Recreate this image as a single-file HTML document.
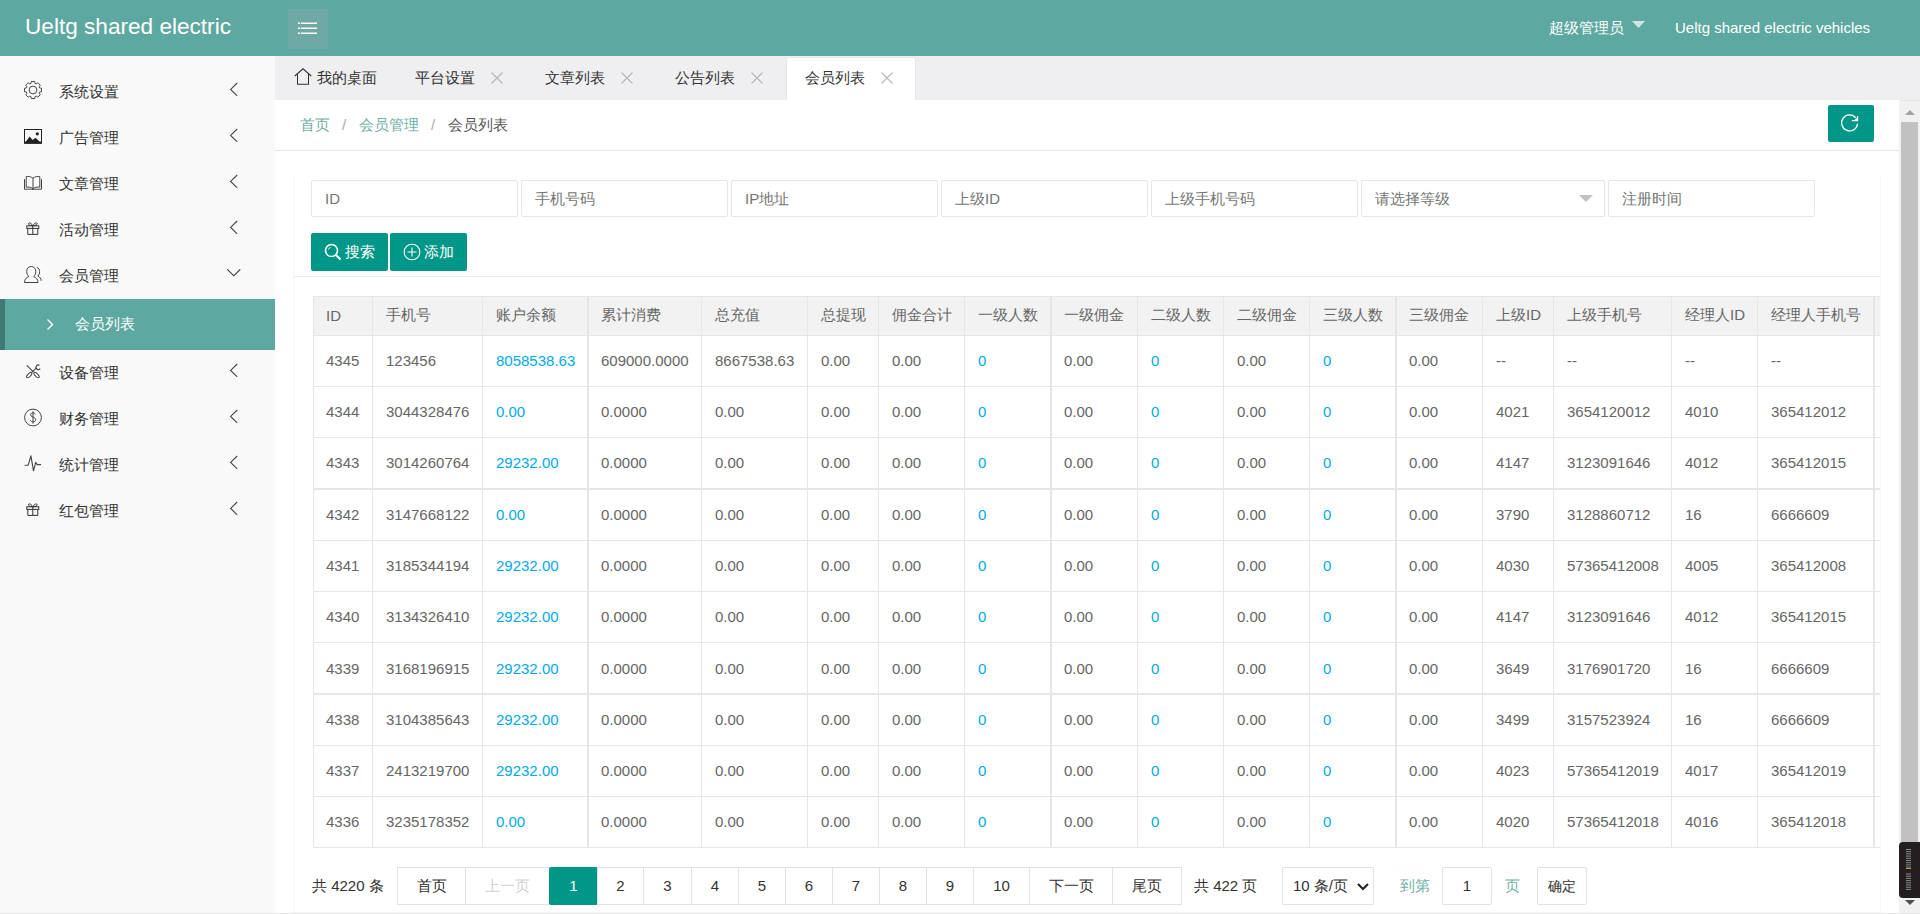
<!DOCTYPE html><html><head><meta charset="utf-8"><style>
*{margin:0;padding:0;box-sizing:border-box}
i{font-style:normal;display:inline-block;width:1em}
html,body{width:1920px;height:914px;overflow:hidden;background:#fff;font-family:"Liberation Sans",sans-serif;font-size:15px;color:#333}
.a{position:absolute;white-space:nowrap}
#hdr{position:absolute;left:0;top:0;width:1920px;height:56px;background:#5da8a0}
#logo{left:25px;top:12px;font-size:22.6px;color:#fff;line-height:30px}
#menubtn{left:288px;top:9px;width:40px;height:40px;background:#6fa9a3}
#side{position:absolute;left:0;top:56px;width:275px;height:858px;background:#f9f9f9}
.mt{left:59px;line-height:20px;font-size:15px;color:#333}
.arr{left:229px;width:10px;height:14px}
#tabs{position:absolute;left:275px;top:56px;width:1645px;height:45px;background:#efeef0;border-bottom:1px solid #e4e4e4}
.tt{top:0;line-height:44px;font-size:15px;color:#333}
#crumb{position:absolute;left:275px;top:100px;width:1625px;height:51px;border-bottom:1px solid #e6e6e6;background:#fff}
.inp{top:180px;height:37px;border:1px solid #e6e6e6;border-radius:2px;background:#fff;color:#757575;font-size:15px;line-height:35px;padding-left:13px}
.btn{top:233px;height:38px;width:77px;background:#009688;border-radius:2px;color:#fff;font-size:15px;line-height:38px}
table{border-collapse:collapse;table-layout:fixed;font-size:15px;color:#666}
td,th{border:1px solid #e6e6e6;padding:0 0 0 13px;text-align:left;font-weight:normal;white-space:nowrap;overflow:hidden}
th{background:#f2f2f2;height:39px;padding-bottom:2px}
td{padding-bottom:1px}
.c1{padding-left:12px}
.lk{color:#01aaed}
.pg{top:867px;height:38px;line-height:36px;border:1px solid #e2e2e2;background:#fff;text-align:center;color:#333;font-size:15px}
</style></head><body>
<div id="hdr">
<div id="logo" class="a">Ueltg shared electric</div>
<div id="menubtn" class="a"><svg width="40" height="40" viewBox="0 0 40 40" style="position:absolute;left:0;top:0"><g fill="#fff"><rect x="10" y="13.5" width="2" height="1.5"/><rect x="13" y="13.5" width="16" height="1.5"/><rect x="10" y="18.5" width="2" height="1.5"/><rect x="13" y="18.5" width="16" height="1.5"/><rect x="10" y="23.5" width="2" height="1.5"/><rect x="13" y="23.5" width="16" height="1.5"/></g></svg></div>
<div class="a" style="left:1549px;top:18px;font-size:15px;color:#fff;line-height:20px"><i>超</i><i>级</i><i>管</i><i>理</i><i>员</i></div>
<svg class="a" style="left:1632px;top:21px" width="13" height="8"><path d="M0 0H13L6.5 7Z" fill="#d3e4e1"/></svg>
<div class="a" style="left:1675px;top:18px;font-size:15px;color:#fff;line-height:20px">Ueltg shared electric vehicles</div>
</div>
<div id="side"></div>
<svg class="a" style="left:23px;top:80px" width="20" height="20" viewBox="0 0 20 20"><path d="M16.59 7.96 L18.53 8.27 L18.53 11.73 L16.59 12.04 L16.10 13.22 L17.25 14.81 L14.81 17.25 L13.22 16.10 L12.04 16.59 L11.73 18.53 L8.27 18.53 L7.96 16.59 L6.78 16.10 L5.19 17.25 L2.75 14.81 L3.90 13.22 L3.41 12.04 L1.47 11.73 L1.47 8.27 L3.41 7.96 L3.90 6.78 L2.75 5.19 L5.19 2.75 L6.78 3.90 L7.96 3.41 L8.27 1.47 L11.73 1.47 L12.04 3.41 L13.22 3.90 L14.81 2.75 L17.25 5.19 L16.10 6.78Z" fill="none" stroke="#444" stroke-width="1" stroke-linejoin="round"/><circle cx="10" cy="10" r="3.9" fill="none" stroke="#444" stroke-width="1"/></svg>
<div class="a mt" style="top:82px"><i>系</i><i>统</i><i>设</i><i>置</i></div>
<svg class="a arr" style="top:82px" width="10" height="16"><path d="M8.2 1L1.6 7.4L8.2 13.8" fill="none" stroke="#444" stroke-width="1.1"/></svg>
<svg class="a" style="left:23px;top:126px" width="20" height="20" viewBox="0 0 20 20"><rect x="1.5" y="3.5" width="17" height="13.5" fill="none" stroke="#222" stroke-width="1"/><path d="M1.5 17.5L6.6 10.6L9.6 14L12.6 11.8L18.5 17.5Z" fill="#222"/><rect x="1" y="15.6" width="18" height="2" fill="#222"/><circle cx="14.3" cy="7.8" r="1.6" fill="#222"/></svg>
<div class="a mt" style="top:128px"><i>广</i><i>告</i><i>管</i><i>理</i></div>
<svg class="a arr" style="top:128px" width="10" height="16"><path d="M8.2 1L1.6 7.4L8.2 13.8" fill="none" stroke="#444" stroke-width="1.1"/></svg>
<svg class="a" style="left:23px;top:172px" width="20" height="20" viewBox="0 0 20 20"><path d="M10 6.2C8 4.6 5.2 4.2 3.2 4.6V15.2C5.2 14.8 8 15.2 10 16.6C12 15.2 14.8 14.8 16.8 15.2V4.6C14.8 4.2 12 4.6 10 6.2ZM10 6.2V16.6" fill="none" stroke="#444" stroke-width="1"/><path d="M1.5 7.2V17.2H8.5Q10 17.8 11.5 17.2H18.5V7.2" fill="none" stroke="#444" stroke-width="1"/></svg>
<div class="a mt" style="top:174px"><i>文</i><i>章</i><i>管</i><i>理</i></div>
<svg class="a arr" style="top:174px" width="10" height="16"><path d="M8.2 1L1.6 7.4L8.2 13.8" fill="none" stroke="#444" stroke-width="1.1"/></svg>
<svg class="a" style="left:23px;top:218px" width="20" height="20" viewBox="0 0 20 20"><rect x="3.8" y="7.8" width="12" height="2.6" fill="none" stroke="#333" stroke-width="1"/><path d="M4.8 10.4V16.4H14.8V10.4M9.8 7.8V16.4" fill="none" stroke="#333" stroke-width="1"/><path d="M9.8 7.8C8.5 5.2 6 4 5.5 5.5C5.2 6.6 6.5 7.5 9.8 7.8C13.1 7.5 14.4 6.6 14.1 5.5C13.6 4 11.1 5.2 9.8 7.8" fill="none" stroke="#333" stroke-width="1"/></svg>
<div class="a mt" style="top:220px"><i>活</i><i>动</i><i>管</i><i>理</i></div>
<svg class="a arr" style="top:220px" width="10" height="16"><path d="M8.2 1L1.6 7.4L8.2 13.8" fill="none" stroke="#444" stroke-width="1.1"/></svg>
<svg class="a" style="left:23px;top:264px" width="20" height="20" viewBox="0 0 20 20"><path d="M1.5 18.5H15C15 15.2 13.2 13.6 10.6 12.6C12 11.6 12.8 9.6 12.8 7.5C12.8 4.5 11 2.5 8.25 2.5C5.5 2.5 3.7 4.5 3.7 7.5C3.7 9.6 4.5 11.6 5.9 12.6C3.3 13.6 1.5 15.2 1.5 18.5Z" fill="none" stroke="#444" stroke-width="1"/><path d="M13.8 3.4C15.6 3.9 16.6 5.6 16.6 7.6C16.6 9.5 15.9 11 14.8 12C16.8 13 18.2 14.6 18.2 16.8" fill="none" stroke="#444" stroke-width="1"/></svg>
<div class="a mt" style="top:266px"><i>会</i><i>员</i><i>管</i><i>理</i></div>
<svg class="a" style="left:226px;top:268px" width="16" height="10"><path d="M1.3 1.3L7.8 7.8L14.3 1.3" fill="none" stroke="#333" stroke-width="1.1"/></svg>
<svg class="a" style="left:23px;top:361px" width="20" height="20" viewBox="0 0 20 20"><path d="M3.8 4.3L10.6 11.1" stroke="#444" stroke-width="1.1"/><ellipse cx="13.6" cy="14.1" rx="3.4" ry="1.5" transform="rotate(45 13.6 14.1)" fill="none" stroke="#444" stroke-width="1"/><ellipse cx="6.2" cy="14.1" rx="3.4" ry="1.5" transform="rotate(-45 6.2 14.1)" fill="none" stroke="#444" stroke-width="1"/><path d="M8.6 11.6L13.4 6.8" stroke="#444" stroke-width="1.1"/><path d="M16.6 4.4A2.3 2.3 0 1 0 17.2 7.6" fill="none" stroke="#444" stroke-width="1.1"/></svg>
<div class="a mt" style="top:363px"><i>设</i><i>备</i><i>管</i><i>理</i></div>
<svg class="a arr" style="top:363px" width="10" height="16"><path d="M8.2 1L1.6 7.4L8.2 13.8" fill="none" stroke="#444" stroke-width="1.1"/></svg>
<svg class="a" style="left:23px;top:407px" width="20" height="20" viewBox="0 0 20 20"><circle cx="10" cy="10.5" r="8.4" fill="none" stroke="#444" stroke-width="1"/><path d="M12.4 7.3C12 6.4 11.1 5.9 10 5.9C8.6 5.9 7.6 6.7 7.6 7.9C7.6 10.5 12.6 9.6 12.6 12.6C12.6 13.9 11.5 14.9 10 14.9C8.8 14.9 7.8 14.3 7.4 13.3M10 4.3V16.7" fill="none" stroke="#444" stroke-width="1"/></svg>
<div class="a mt" style="top:409px"><i>财</i><i>务</i><i>管</i><i>理</i></div>
<svg class="a arr" style="top:409px" width="10" height="16"><path d="M8.2 1L1.6 7.4L8.2 13.8" fill="none" stroke="#444" stroke-width="1.1"/></svg>
<svg class="a" style="left:23px;top:453px" width="20" height="20" viewBox="0 0 20 20"><path d="M1.7 12.2H5.2L7.9 2.9L10.5 17.8L12.7 9.4L14.2 11.6H18" fill="none" stroke="#444" stroke-width="1.1" stroke-linejoin="round"/></svg>
<div class="a mt" style="top:455px"><i>统</i><i>计</i><i>管</i><i>理</i></div>
<svg class="a arr" style="top:455px" width="10" height="16"><path d="M8.2 1L1.6 7.4L8.2 13.8" fill="none" stroke="#444" stroke-width="1.1"/></svg>
<svg class="a" style="left:23px;top:499px" width="20" height="20" viewBox="0 0 20 20"><rect x="3.8" y="7.8" width="12" height="2.6" fill="none" stroke="#333" stroke-width="1"/><path d="M4.8 10.4V16.4H14.8V10.4M9.8 7.8V16.4" fill="none" stroke="#333" stroke-width="1"/><path d="M9.8 7.8C8.5 5.2 6 4 5.5 5.5C5.2 6.6 6.5 7.5 9.8 7.8C13.1 7.5 14.4 6.6 14.1 5.5C13.6 4 11.1 5.2 9.8 7.8" fill="none" stroke="#333" stroke-width="1"/></svg>
<div class="a mt" style="top:501px"><i>红</i><i>包</i><i>管</i><i>理</i></div>
<svg class="a arr" style="top:501px" width="10" height="16"><path d="M8.2 1L1.6 7.4L8.2 13.8" fill="none" stroke="#444" stroke-width="1.1"/></svg>
<div class="a" style="left:0;top:299px;width:275px;height:51px;background:#5da8a0"></div>
<div class="a" style="left:0;top:299px;width:5px;height:51px;background:#3f7a74"></div>
<svg class="a" style="left:46px;top:318px" width="8" height="13"><path d="M1.5 1.5l5 5-5 5" fill="none" stroke="#fff" stroke-width="1.4"/></svg>
<div class="a" style="left:75px;top:314px;line-height:20px;color:#fff;font-size:15px"><i>会</i><i>员</i><i>列</i><i>表</i></div>
<div id="tabs"></div>
<div class="a" style="left:786px;top:57px;width:130px;height:44px;background:#fff;border:1px solid #e6e6e6;border-bottom:none;border-radius:2px 2px 0 0"></div>
<svg class="a" style="left:294px;top:68px" width="18" height="17" viewBox="0 0 18 17"><path d="M0.8 8L9 0.8L17.2 8M3.5 6V16.2h11V6" fill="none" stroke="#333" stroke-width="1.05"/></svg>
<div class="a tt" style="left:317px;top:56px"><i>我</i><i>的</i><i>桌</i><i>面</i></div>
<div class="a tt" style="left:415px;top:56px"><i>平</i><i>台</i><i>设</i><i>置</i></div>
<svg class="a" style="left:491px;top:72px" width="12" height="12"><path d="M.5.5l11 11M11.5.5l-11 11" stroke="#b5b5b5" stroke-width="1.1"/></svg>
<div class="a tt" style="left:545px;top:56px"><i>文</i><i>章</i><i>列</i><i>表</i></div>
<svg class="a" style="left:621px;top:72px" width="12" height="12"><path d="M.5.5l11 11M11.5.5l-11 11" stroke="#b5b5b5" stroke-width="1.1"/></svg>
<div class="a tt" style="left:675px;top:56px"><i>公</i><i>告</i><i>列</i><i>表</i></div>
<svg class="a" style="left:751px;top:72px" width="12" height="12"><path d="M.5.5l11 11M11.5.5l-11 11" stroke="#b5b5b5" stroke-width="1.1"/></svg>
<div class="a tt" style="left:805px;top:56px"><i>会</i><i>员</i><i>列</i><i>表</i></div>
<svg class="a" style="left:881px;top:72px" width="12" height="12"><path d="M.5.5l11 11M11.5.5l-11 11" stroke="#b5b5b5" stroke-width="1.1"/></svg>
<div id="crumb"></div>
<div class="a" style="left:300px;top:115px;line-height:20px;font-size:15px;color:#6fb0a8"><i>首</i><i>页</i></div>
<div class="a" style="left:342px;top:115px;line-height:20px;font-size:15px;color:#aaa">/</div>
<div class="a" style="left:359px;top:115px;line-height:20px;font-size:15px;color:#6fb0a8"><i>会</i><i>员</i><i>管</i><i>理</i></div>
<div class="a" style="left:431px;top:115px;line-height:20px;font-size:15px;color:#aaa">/</div>
<div class="a" style="left:448px;top:115px;line-height:20px;font-size:15px;color:#555"><i>会</i><i>员</i><i>列</i><i>表</i></div>
<div class="a" style="left:1828px;top:105px;width:46px;height:37px;background:#009688;border-radius:2px"><svg width="46" height="37" viewBox="0 0 46 37"><path d="M27.73 12.76A8 8 0 1 0 29.57 18.6" fill="none" stroke="#fff" stroke-width="1.2"/><path d="M23.9 15.6H29.6V11" fill="none" stroke="#fff" stroke-width="1.3"/><path d="M26 15.6L29.6 12V15.6Z" fill="#fff"/></svg></div>
<div class="a" style="left:1899px;top:101px;width:21px;height:813px;background:#f1f1f1"></div>
<div class="a" style="left:1901px;top:122px;width:17px;height:720px;background:#c1c1c1"></div>
<svg class="a" style="left:1904px;top:109px" width="12" height="7"><path d="M1 6L6 1l5 5z" fill="#a3a3a3"/></svg>
<div class="a" style="left:1899px;top:842px;width:21px;height:56px;background:#231f20;border-radius:4px 0 0 4px"></div>
<svg class="a" style="left:1906px;top:849px" width="5" height="42"><rect x="0" y="0.0" width="5" height="1" fill="#8a8a8a"/><rect x="0" y="2.2" width="5" height="1" fill="#8a8a8a"/><rect x="0" y="4.4" width="5" height="1" fill="#8a8a8a"/><rect x="0" y="6.6" width="5" height="1" fill="#8a8a8a"/><rect x="0" y="8.8" width="5" height="1" fill="#8a8a8a"/><rect x="0" y="11.0" width="5" height="1" fill="#8a8a8a"/><rect x="0" y="13.2" width="5" height="1" fill="#8a8a8a"/><rect x="0" y="15.4" width="5" height="1" fill="#8a8a8a"/><rect x="0" y="17.6" width="5" height="1" fill="#8a8a8a"/><rect x="0" y="19" width="5" height="1" fill="#c8884a"/><rect x="0" y="24.5" width="5" height="1" fill="#8a8a8a"/><rect x="0" y="26.7" width="5" height="1" fill="#8a8a8a"/><rect x="0" y="28.9" width="5" height="1" fill="#8a8a8a"/><rect x="0" y="31.1" width="5" height="1" fill="#8a8a8a"/><rect x="0" y="33.3" width="5" height="1" fill="#8a8a8a"/><rect x="0" y="35.5" width="5" height="1" fill="#8a8a8a"/><rect x="0" y="37.7" width="5" height="1" fill="#8a8a8a"/><rect x="0" y="39.9" width="5" height="1" fill="#8a8a8a"/></svg>
<svg class="a" style="left:1904px;top:899px" width="12" height="8"><path d="M1 1L6 6l5-5z" fill="#505050"/></svg>
<div class="a" style="left:0;top:913px;width:1920px;height:1px;background:#e4e4e4"></div>
<div class="a" style="left:293px;top:174px;width:1588px;height:739px;border:1px dotted #f0f0f0;border-top:none"></div>
<div class="a" style="left:293px;top:276px;width:1587px;height:1px;background:#eee"></div>
<div class="a inp" style="left:311px;width:207px">ID</div>
<div class="a inp" style="left:521px;width:207px"><i>手</i><i>机</i><i>号</i><i>码</i></div>
<div class="a inp" style="left:731px;width:207px">IP<i>地</i><i>址</i></div>
<div class="a inp" style="left:941px;width:207px"><i>上</i><i>级</i>ID</div>
<div class="a inp" style="left:1151px;width:207px"><i>上</i><i>级</i><i>手</i><i>机</i><i>号</i><i>码</i></div>
<div class="a inp" style="left:1361px;width:244px"><i>请</i><i>选</i><i>择</i><i>等</i><i>级</i></div>
<div class="a inp" style="left:1608px;width:207px"><i>注</i><i>册</i><i>时</i><i>间</i></div>
<svg class="a" style="left:1579px;top:195px" width="14" height="8"><path d="M0 0H14L7 7Z" fill="#c2c2c2"/></svg>
<div class="a btn" style="left:311px"><svg style="position:absolute;left:13px;top:10px" width="18" height="18" viewBox="0 0 18 18"><circle cx="7.5" cy="7.5" r="6" fill="none" stroke="#fff" stroke-width="1.6"/><path d="M12 12l4.5 4.5" stroke="#fff" stroke-width="2"/><path d="M4.5 6.5a3 3 0 0 1 2-2" fill="none" stroke="#fff" stroke-width="1"/></svg><span style="position:absolute;left:34px;top:0"><i>搜</i><i>索</i></span></div>
<div class="a btn" style="left:390px"><svg style="position:absolute;left:13px;top:10px" width="18" height="18" viewBox="0 0 18 18"><circle cx="9" cy="9" r="7.8" fill="none" stroke="#fff" stroke-width="1.1"/><path d="M9 4.5v9M4.5 9h9" stroke="#fff" stroke-width="1.1"/></svg><span style="position:absolute;left:34px;top:0"><i>添</i><i>加</i></span></div>
<div class="a" style="left:313px;top:296px;width:1567px;height:552px;overflow:hidden">
<table style="width:1678px">
<colgroup><col style="width:59px"><col style="width:110px"><col style="width:105px"><col style="width:114px"><col style="width:106px"><col style="width:71px"><col style="width:86px"><col style="width:86px"><col style="width:87px"><col style="width:86px"><col style="width:86px"><col style="width:86px"><col style="width:87px"><col style="width:71px"><col style="width:118px"><col style="width:86px"><col style="width:116px"><col style="width:117px"></colgroup>
<tr><th class="c1">ID</th><th><i>手</i><i>机</i><i>号</i></th><th><i>账</i><i>户</i><i>余</i><i>额</i></th><th><i>累</i><i>计</i><i>消</i><i>费</i></th><th><i>总</i><i>充</i><i>值</i></th><th><i>总</i><i>提</i><i>现</i></th><th><i>佣</i><i>金</i><i>合</i><i>计</i></th><th><i>一</i><i>级</i><i>人</i><i>数</i></th><th><i>一</i><i>级</i><i>佣</i><i>金</i></th><th><i>二</i><i>级</i><i>人</i><i>数</i></th><th><i>二</i><i>级</i><i>佣</i><i>金</i></th><th><i>三</i><i>级</i><i>人</i><i>数</i></th><th><i>三</i><i>级</i><i>佣</i><i>金</i></th><th><i>上</i><i>级</i>ID</th><th><i>上</i><i>级</i><i>手</i><i>机</i><i>号</i></th><th><i>经</i><i>理</i><i>人</i>ID</th><th><i>经</i><i>理</i><i>人</i><i>手</i><i>机</i><i>号</i></th><th><i>操</i><i>作</i></th></tr>
<tr style="height:51px"><td class="c1">4345</td><td>123456</td><td><span class="lk">8058538.63</span></td><td>609000.0000</td><td>8667538.63</td><td>0.00</td><td>0.00</td><td><span class="lk">0</span></td><td>0.00</td><td><span class="lk">0</span></td><td>0.00</td><td><span class="lk">0</span></td><td>0.00</td><td>--</td><td>--</td><td>--</td><td>--</td><td></td></tr>
<tr style="height:51px"><td class="c1">4344</td><td>3044328476</td><td><span class="lk">0.00</span></td><td>0.0000</td><td>0.00</td><td>0.00</td><td>0.00</td><td><span class="lk">0</span></td><td>0.00</td><td><span class="lk">0</span></td><td>0.00</td><td><span class="lk">0</span></td><td>0.00</td><td>4021</td><td>3654120012</td><td>4010</td><td>365412012</td><td></td></tr>
<tr style="height:51px"><td class="c1">4343</td><td>3014260764</td><td><span class="lk">29232.00</span></td><td>0.0000</td><td>0.00</td><td>0.00</td><td>0.00</td><td><span class="lk">0</span></td><td>0.00</td><td><span class="lk">0</span></td><td>0.00</td><td><span class="lk">0</span></td><td>0.00</td><td>4147</td><td>3123091646</td><td>4012</td><td>365412015</td><td></td></tr>
<tr style="height:52px"><td class="c1">4342</td><td>3147668122</td><td><span class="lk">0.00</span></td><td>0.0000</td><td>0.00</td><td>0.00</td><td>0.00</td><td><span class="lk">0</span></td><td>0.00</td><td><span class="lk">0</span></td><td>0.00</td><td><span class="lk">0</span></td><td>0.00</td><td>3790</td><td>3128860712</td><td>16</td><td>6666609</td><td></td></tr>
<tr style="height:51px"><td class="c1">4341</td><td>3185344194</td><td><span class="lk">29232.00</span></td><td>0.0000</td><td>0.00</td><td>0.00</td><td>0.00</td><td><span class="lk">0</span></td><td>0.00</td><td><span class="lk">0</span></td><td>0.00</td><td><span class="lk">0</span></td><td>0.00</td><td>4030</td><td>57365412008</td><td>4005</td><td>365412008</td><td></td></tr>
<tr style="height:51px"><td class="c1">4340</td><td>3134326410</td><td><span class="lk">29232.00</span></td><td>0.0000</td><td>0.00</td><td>0.00</td><td>0.00</td><td><span class="lk">0</span></td><td>0.00</td><td><span class="lk">0</span></td><td>0.00</td><td><span class="lk">0</span></td><td>0.00</td><td>4147</td><td>3123091646</td><td>4012</td><td>365412015</td><td></td></tr>
<tr style="height:52px"><td class="c1">4339</td><td>3168196915</td><td><span class="lk">29232.00</span></td><td>0.0000</td><td>0.00</td><td>0.00</td><td>0.00</td><td><span class="lk">0</span></td><td>0.00</td><td><span class="lk">0</span></td><td>0.00</td><td><span class="lk">0</span></td><td>0.00</td><td>3649</td><td>3176901720</td><td>16</td><td>6666609</td><td></td></tr>
<tr style="height:51px"><td class="c1">4338</td><td>3104385643</td><td><span class="lk">29232.00</span></td><td>0.0000</td><td>0.00</td><td>0.00</td><td>0.00</td><td><span class="lk">0</span></td><td>0.00</td><td><span class="lk">0</span></td><td>0.00</td><td><span class="lk">0</span></td><td>0.00</td><td>3499</td><td>3157523924</td><td>16</td><td>6666609</td><td></td></tr>
<tr style="height:51px"><td class="c1">4337</td><td>2413219700</td><td><span class="lk">29232.00</span></td><td>0.0000</td><td>0.00</td><td>0.00</td><td>0.00</td><td><span class="lk">0</span></td><td>0.00</td><td><span class="lk">0</span></td><td>0.00</td><td><span class="lk">0</span></td><td>0.00</td><td>4023</td><td>57365412019</td><td>4017</td><td>365412019</td><td></td></tr>
<tr style="height:51px"><td class="c1">4336</td><td>3235178352</td><td><span class="lk">0.00</span></td><td>0.0000</td><td>0.00</td><td>0.00</td><td>0.00</td><td><span class="lk">0</span></td><td>0.00</td><td><span class="lk">0</span></td><td>0.00</td><td><span class="lk">0</span></td><td>0.00</td><td>4020</td><td>57365412018</td><td>4016</td><td>365412018</td><td></td></tr>
</table></div>
<div class="a" style="left:588px;top:296px;width:1px;height:552px;background:#e6e6e6"></div>
<div class="a" style="left:1051px;top:296px;width:1px;height:552px;background:#e6e6e6"></div>
<div class="a" style="left:1396px;top:296px;width:1px;height:552px;background:#e6e6e6"></div>
<div class="a" style="left:1874px;top:296px;width:1px;height:552px;background:#e6e6e6"></div>
<div class="a" style="left:313px;top:489px;width:1567px;height:1px;background:#e6e6e6"></div>
<div class="a" style="left:313px;top:693px;width:1567px;height:1px;background:#e6e6e6"></div>
<div class="a" style="left:312px;top:876px;line-height:20px;color:#333"><i>共</i> 4220 <i>条</i></div>
<div class="a pg" style="left:397px;width:69px;color:#333"><i>首</i><i>页</i></div>
<div class="a pg" style="left:465px;width:85px;color:#d2d2d2"><i>上</i><i>一</i><i>页</i></div>
<div class="a pg" style="left:549px;width:49px;color:#fff;background:#009688;border-color:#009688;border-radius:2px">1</div>
<div class="a pg" style="left:597px;width:47px;color:#333">2</div>
<div class="a pg" style="left:643px;width:49px;color:#333">3</div>
<div class="a pg" style="left:691px;width:48px;color:#333">4</div>
<div class="a pg" style="left:738px;width:48px;color:#333">5</div>
<div class="a pg" style="left:785px;width:48px;color:#333">6</div>
<div class="a pg" style="left:832px;width:48px;color:#333">7</div>
<div class="a pg" style="left:879px;width:48px;color:#333">8</div>
<div class="a pg" style="left:926px;width:48px;color:#333">9</div>
<div class="a pg" style="left:973px;width:57px;color:#333">10</div>
<div class="a pg" style="left:1029px;width:84px;color:#333"><i>下</i><i>一</i><i>页</i></div>
<div class="a pg" style="left:1112px;width:70px;color:#333"><i>尾</i><i>页</i></div>
<div class="a" style="left:1194px;top:876px;line-height:20px;color:#333"><i>共</i> 422 <i>页</i></div>
<div class="a pg" style="left:1282px;width:92px;text-align:left;padding-left:10px;border-radius:2px">10 <i>条</i>/<i>页</i></div>
<svg class="a" style="left:1357px;top:882px" width="12" height="10"><path d="M1 2l5 5 5-5" fill="none" stroke="#222" stroke-width="2"/></svg>
<div class="a" style="left:1400px;top:876px;line-height:20px;color:#6fb0a8"><i>到</i><i>第</i></div>
<div class="a pg" style="left:1442px;width:50px;border-radius:2px">1</div>
<div class="a" style="left:1505px;top:876px;line-height:20px;color:#6fb0a8"><i>页</i></div>
<div class="a pg" style="left:1537px;width:50px;border-radius:2px;font-size:14px"><i>确</i><i>定</i></div>
</body></html>
